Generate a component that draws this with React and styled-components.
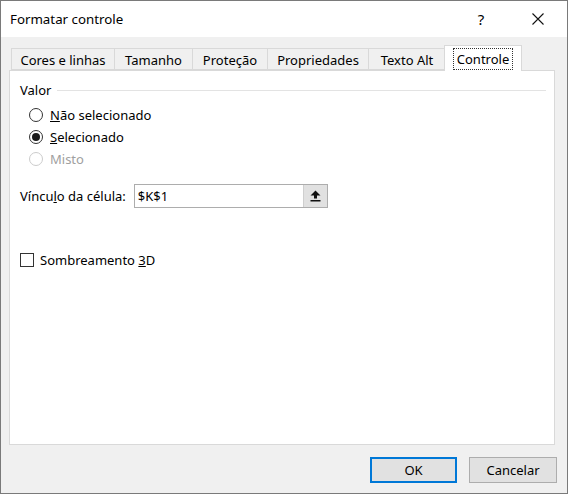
import React from "react";
import styled, { createGlobalStyle } from "styled-components";

const GlobalStyle = createGlobalStyle`
  body {
    margin: 0;
    background: #ffffff;
    font-family: "Noto Sans", "Open Sans", sans-serif;
    color: #000;
  }
`;

const Window = styled.div`
  width: 568px;
  height: 494px;
  box-sizing: border-box;
  border: 1px solid #7a7a7a;
  display: flex;
  flex-direction: column;
  background: #f0f0f0;
`;

const TitleBar = styled.div`
  height: 36px;
  background: #ffffff;
  display: flex;
  align-items: center;
  padding-left: 9px;
  font-size: 13.3px;
`;

const Title = styled.div`
  flex: 1;
`;

const Help = styled.div`
  width: 40px;
  text-align: center;
  font-size: 15px;
  margin-right: 15px;
`;

const Close = styled.div`
  width: 44px;
  display: flex;
  justify-content: center;
  margin-right: 7px;
`;

const Body = styled.div`
  flex: 1;
  display: flex;
  flex-direction: column;
  padding: 8px 12px 0 8px;
`;

const TabStrip = styled.div`
  display: flex;
  align-items: flex-end;
  height: 25px;
  padding-left: 2px;
  position: relative;
  z-index: 1;
`;

const Tab = styled.div`
  width: ${(p) => p.$w}px;
  height: ${(p) => (p.$active ? 26 : 22)}px;
  box-sizing: border-box;
  display: flex;
  align-items: center;
  justify-content: center;
  font-size: 13px;
  border: 1px solid #d9d9d9;
  border-bottom: ${(p) => (p.$active ? "none" : "1px solid #d9d9d9")};
  border-left: ${(p) => (p.$first || p.$active ? "1px solid #d9d9d9" : "none")};
  background: ${(p) => (p.$active ? "#ffffff" : "#f0f0f0")};
  margin: ${(p) => (p.$active ? "0 0 -1px -2px" : "0")};
  padding-top: ${(p) => (p.$active ? "0" : "1px")};
`;

const Focus = styled.span`
  border: 1px dotted #333;
  padding: 1px 3px;
`;

const Panel = styled.div`
  height: 375px;
  box-sizing: border-box;
  background: #ffffff;
  border: 1px solid #d9d9d9;
  padding: 11px 8px 0 10px;
  font-size: 13px;
`;

const GroupHead = styled.div`
  display: flex;
  align-items: center;
  height: 16px;
  gap: 6px;
  &::after {
    content: "";
    flex: 1;
    border-top: 1px solid #e3e3e3;
  }
`;

const Options = styled.div`
  margin-top: 6px;
  padding-left: 9px;
`;

const OptionRow = styled.div`
  height: 22px;
  display: flex;
  align-items: center;
  gap: 7px;
  color: ${(p) => (p.$disabled ? "#a0a0a0" : "#000")};
`;

const Radio = styled.span`
  width: 14px;
  height: 14px;
  box-sizing: border-box;
  border-radius: 50%;
  border: 1px solid ${(p) => (p.$disabled ? "#cccccc" : "#333333")};
  background: #fff;
  display: flex;
  align-items: center;
  justify-content: center;
  &::after {
    content: "";
    width: 8px;
    height: 8px;
    border-radius: 50%;
    background: ${(p) => (p.$checked ? "#1a1a1a" : "transparent")};
  }
`;

const FieldRow = styled.div`
  margin-top: 14px;
  display: flex;
  align-items: center;
  gap: 8px;
`;

const Input = styled.div`
  width: 194px;
  height: 24px;
  box-sizing: border-box;
  border: 1px solid #adadad;
  display: flex;
  align-items: center;
  padding-left: 3px;
`;

const InputText = styled.span`
  flex: 1;
`;

const PickButton = styled.span`
  width: 24px;
  height: 22px;
  box-sizing: border-box;
  background: #e1e1e1;
  border-left: 1px solid #cfcfcf;
  display: flex;
  align-items: center;
  justify-content: center;
`;

const CheckRow = styled.div`
  margin-top: 42px;
  height: 20px;
  display: flex;
  align-items: center;
  gap: 6px;
`;

const Checkbox = styled.span`
  width: 14px;
  height: 14px;
  box-sizing: border-box;
  border: 1px solid #333;
  background: #fff;
`;

const Footer = styled.div`
  display: flex;
  justify-content: flex-end;
  gap: 12px;
  margin-top: 12px;
  margin-right: -2px;
`;

const Button = styled.div`
  width: ${(p) => p.$w}px;
  height: 26px;
  box-sizing: border-box;
  background: #e1e1e1;
  border: ${(p) => (p.$default ? "2px solid #0078d7" : "1px solid #adadad")};
  display: flex;
  align-items: center;
  justify-content: center;
  font-size: 13px;
`;

const tabs = [
  { label: "Cores e linhas", w: 104 },
  { label: "Tamanho", w: 78 },
  { label: "Proteção", w: 75 },
  { label: "Propriedades", w: 101 },
  { label: "Texto Alt", w: 77 },
];

export default function App() {
  return (
    <>
      <GlobalStyle />
      <Window>
        <TitleBar>
          <Title>Formatar controle</Title>
          <Help>?</Help>
          <Close>
            <svg width="12" height="12" viewBox="0 0 12 12">
              <path d="M0.5 0.5 L11.5 11.5 M11.5 0.5 L0.5 11.5" stroke="#111" strokeWidth="1.1" />
            </svg>
          </Close>
        </TitleBar>
        <Body>
          <TabStrip>
            {tabs.map((t, i) => (
              <Tab key={t.label} $w={t.w} $first={i === 0}>
                {t.label}
              </Tab>
            ))}
            <Tab $w={78} $active>
              <Focus>Controle</Focus>
            </Tab>
          </TabStrip>
          <Panel>
            <GroupHead>Valor</GroupHead>
            <Options>
              <OptionRow>
                <Radio />
                <span>
                  <u>N</u>ão selecionado
                </span>
              </OptionRow>
              <OptionRow>
                <Radio $checked />
                <span>
                  <u>S</u>elecionado
                </span>
              </OptionRow>
              <OptionRow $disabled>
                <Radio $disabled />
                <span>Misto</span>
              </OptionRow>
            </Options>
            <FieldRow>
              <span>
                Víncu<u>l</u>o da célula:
              </span>
              <Input>
                <InputText>$K$1</InputText>
                <PickButton>
                  <svg width="11" height="12" viewBox="0 0 11 12">
                    <path d="M5.5 0.5 L10.5 5.5 L7 5.5 L7 8.5 L4 8.5 L4 5.5 L0.5 5.5 Z" fill="#111" />
                    <rect x="0.5" y="10" width="10" height="1.5" fill="#111" />
                  </svg>
                </PickButton>
              </Input>
            </FieldRow>
            <CheckRow>
              <Checkbox />
              <span>
                Sombreamento <u>3</u>D
              </span>
            </CheckRow>
          </Panel>
          <Footer>
            <Button $w={87} $default>
              OK
            </Button>
            <Button $w={88}>Cancelar</Button>
          </Footer>
        </Body>
      </Window>
    </>
  );
}
